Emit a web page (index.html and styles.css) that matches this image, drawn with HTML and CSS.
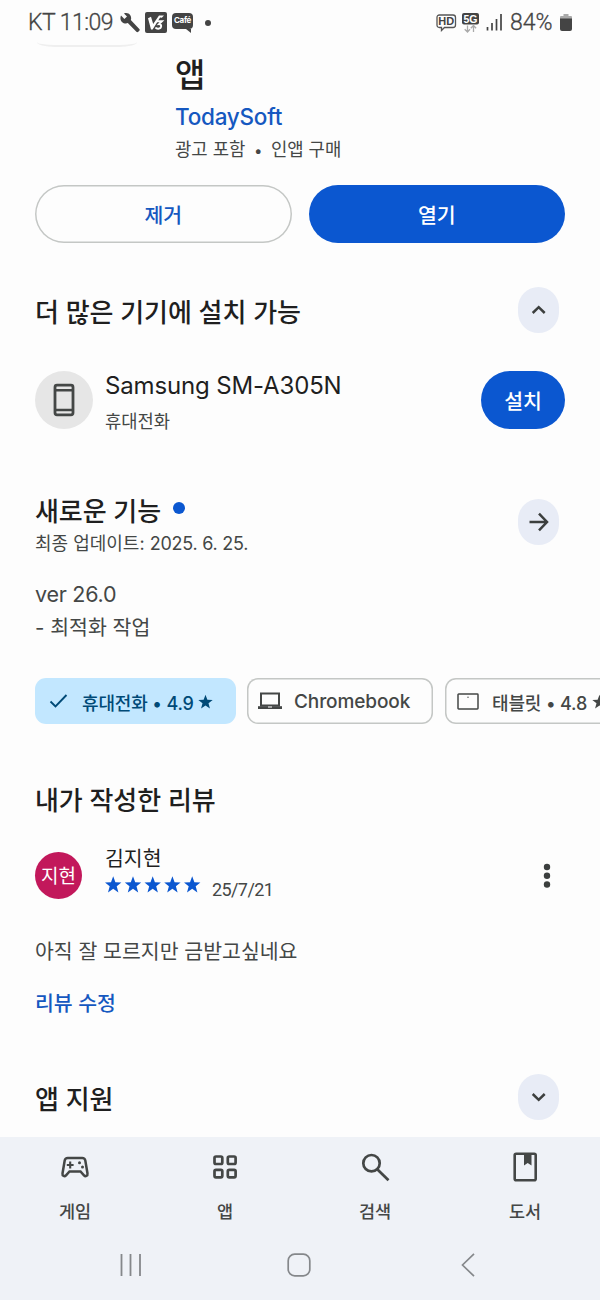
FILE: index.html
```html
<!DOCTYPE html>
<html lang="ko">
<head>
<meta charset="utf-8">
<title>TodaySoft</title>
<link rel="stylesheet" href="styles.css">
</head>
<body>
<div class="screen">
  <header class="status">
    <span class="clock">KT 11:09</span>
    <svg class="wrench" width="20" height="20" viewBox="0 0 20 20"><path d="M1 2.600 4.400 6 7 3.400 4 .5C6.400-.4 9 .3 10.300 2.200c1 1.500 1.100 3.300.5 4.900l8.500 8.800c.6.600.6 1.300 0 1.900l-1 1c-.6.600-1.300.6-1.900 0L7.800 10.100C5.800 10.900 3.600 10.400 2 8.900.3 7.200 0 4.800 1 2.600z" fill="#444"/></svg>
    <svg class="v3" width="22" height="21" viewBox="0 0 22 21"><rect width="22" height="21" rx="2" fill="#444"/><path d="M3 6.200 6 4.800l2.200 7.300L14 3.500h5l-2.200 2.300-1.700-.3L7.600 17.500H6z" fill="#fff"/><path d="M12 9.200h5l-3 2.900c3-.1 3 4.400-.6 4.600-1.400.1-2.400-.4-3-1.200" fill="none" stroke="#fff" stroke-width="1.900"/></svg>
    <span class="cafe">Café<svg width="6" height="4" viewBox="0 0 6 4"><path d="M0 0h5v4z" fill="#444"/></svg></span>
    <span class="notice-dot"></span>
    <span class="status-right">
      <svg width="21" height="18" viewBox="0 0 21 18"><path d="M3.500 1h13.500q2.500 0 2.500 2.500v7.500q0 2.500-2.500 2.500H8.500L5.500 16.500v-3H3.500Q1 13.500 1 11V3.500Q1 1 3.500 1z" fill="none" stroke="#555" stroke-width="1.300"/><text x="10.300" y="11.300" text-anchor="middle" class="hd">HD</text></svg>
      <svg class="fiveg" width="17" height="20" viewBox="0 0 17 20"><rect width="17" height="11.500" rx="2" fill="#444"/><text x="8.500" y="9.700" text-anchor="middle" class="g">5G</text><path d="M5.500 12.500V19M2.700 16.200l2.800 2.800 2.500-2.800M11.500 19v-6.500M8.800 15.300l2.700-2.800 2.600 2.800" fill="none" stroke="#aaa" stroke-width="1.300"/></svg>
      <svg class="signal" width="17" height="17" viewBox="0 0 17 17"><path d="M1.500 13v3.500M6 9v7.500M10.500 5v11.500M15 0v16.500" stroke="#444" stroke-width="1.700"/></svg>
      <span class="pct">84%</span>
      <svg class="battery" width="12" height="17" viewBox="0 0 12 17"><path d="M3.500 0h5v2H11q1 0 1 1v3H0V3q0-1 1-1h2.500z" fill="#aaa"/><path d="M0 4.500h12V15q0 2-2 2H2q-2 0-2-2z" fill="#444"/></svg>
    </span>
  </header>

  <main class="page">
    <div class="hero">
      <div class="thumb"></div>
      <div class="hero-text">
        <h1>앱</h1>
        <a class="developer">TodaySoft</a>
        <p class="notes">광고 포함<span class="sep">•</span>인앱 구매</p>
      </div>
    </div>
    <div class="actions"><button class="btn outline">제거</button><button class="btn filled">열기</button></div>

    <div class="section-head devices-head"><h2>더 많은 기기에 설치 가능</h2><span class="oval"><svg width="20" height="20" viewBox="0 0 20 20"><path d="M3.700 13 9.700 7.200l6 5.800"/></svg></span></div>
    <div class="device">
      <span class="device-icon"><svg width="22" height="34" viewBox="0 0 22 34"><rect x="2" y="2.200" width="18" height="29.600" rx="2" fill="none" stroke="#444746" stroke-width="2.800"/><path d="M2 7.200h18M2 27h18" stroke="#444746" stroke-width="2.600"/></svg></span>
      <div class="device-text"><span class="device-name">Samsung SM-A305N</span><span class="device-kind">휴대전화</span></div>
      <button class="btn filled install">설치</button>
    </div>

    <div class="news">
      <div class="news-text"><h2>새로운 기능<span class="new-dot"></span></h2><p class="updated">최종 업데이트: <span>2025. 6. 25.</span></p></div>
      <span class="oval"><svg width="22" height="22" viewBox="0 0 22 22"><path d="M1.500 11h17.500M11 2.700 19 11l-8 8.300"/></svg></span>
    </div>
    <div class="changes"><p class="ver">ver 26.0</p><p class="change">- 최적화 작업</p></div>

    <div class="chips">
      <span class="chip selected"><svg class="check" width="19" height="16" viewBox="0 0 19 16"><path d="M1.500 8.500 6.500 13.500 17.500 2" fill="none" stroke="#004a77" stroke-width="1.900"/></svg><span class="chip-label">휴대전화 • 4.9</span><svg class="star" width="15" height="15" viewBox="0 0 24 24"><path d="m12 1 3 8 8.500.4-6.700 5.300L19.100 23 12 18.300 4.900 23l2.300-8.300L.5 9.400 9 9z"/></svg></span>
      <span class="chip chrome"><svg width="24" height="18" viewBox="0 0 24 18"><path d="M3 1.500h18v12H3z" fill="none" stroke="#444746" stroke-width="2"/><path d="M0 14.200h24V17H0z" fill="#444746"/><path d="M10 15h4" stroke="#fff"/></svg><span class="chip-label">Chromebook</span></span>
      <span class="chip tablet"><svg width="22" height="17" viewBox="0 0 22 17"><rect x="1" y="1" width="20" height="15" rx=".7" fill="none" stroke="#444746" stroke-width="1.500"/><circle cx="11" cy="4.300" r=".7" fill="#444746"/></svg><span class="chip-label">태블릿 • 4.8</span><svg class="star" width="15" height="15" viewBox="0 0 24 24"><path d="m12 1 3 8 8.500.4-6.700 5.300L19.100 23 12 18.300 4.900 23l2.300-8.300L.5 9.400 9 9z"/></svg></span>
    </div>

    <h2 class="review-head">내가 작성한 리뷰</h2>
    <div class="reviewer">
      <span class="avatar">지현</span>
      <div class="reviewer-text">
        <span class="name">김지현</span>
        <div class="rating">
          <svg width="97" height="18" viewBox="0 0 97 18"><defs><path id="s" d="m8.200.3 2.200 5.900 6 .2-4.700 3.800 1.700 6.200-5.200-3.600-5.200 3.600 1.700-6.200L0 6.400l6-.2z"/></defs><g fill="#0b57d0"><use href="#s"/><use href="#s" x="19.800"/><use href="#s" x="39.500"/><use href="#s" x="59.200"/><use href="#s" x="79"/></g></svg>
          <span class="date">25/7/21</span>
        </div>
      </div>
      <svg class="more" width="8" height="26" viewBox="0 0 8 26"><g fill="#3c3f3e"><circle cx="4" cy="4" r="3.200"/><circle cx="4" cy="12.800" r="3.200"/><circle cx="4" cy="21.500" r="3.200"/></g></svg>
    </div>
    <p class="review">아직 잘 모르지만 금받고싶네요</p>
    <a class="edit">리뷰 수정</a>
    <div class="section-head support"><h2>앱 지원</h2><span class="oval"><svg width="20" height="20" viewBox="0 0 20 20"><path d="m3.700 7 6 5.800 6-5.800"/></svg></span></div>
  </main>

  <nav class="tabs">
    <div class="tab"><svg width="30" height="30" viewBox="0 0 30 30"><path d="M7.800 6h14.400q2.600 0 3.100 2.500l2.200 13c.4 2.600-2.100 3.300-3.500 1.800L20.500 19.500h-11L6 23.300c-1.400 1.500-3.900.8-3.500-1.800l2.200-13Q5.200 6 7.800 6z" fill="none" stroke="#444746" stroke-width="2.500"/><path d="M6.800 13h6.800M10.200 9.600v6.800" stroke="#444746" stroke-width="2.100"/><circle cx="19.500" cy="10.700" r="1.500" fill="#444746"/><circle cx="22.500" cy="15" r="1.500" fill="#444746"/></svg><span>게임</span></div>
    <div class="tab"><svg width="30" height="30" viewBox="0 0 30 30"><g fill="none" stroke="#444746" stroke-width="2.700"><rect x="4.500" y="4.500" width="7.800" height="7.500" rx="1.500"/><rect x="17.800" y="4.500" width="7.800" height="7.500" rx="1.500"/><rect x="4.500" y="17.800" width="7.800" height="7.500" rx="1.500"/><rect x="17.800" y="17.800" width="7.800" height="7.500" rx="1.500"/></g></svg><span>앱</span></div>
    <div class="tab"><svg width="30" height="30" viewBox="0 0 30 30"><g fill="none" stroke="#444746" stroke-width="2.700"><circle cx="11.500" cy="11.200" r="8.200"/><path d="m17.500 17.500 11 10.800"/></g></svg><span>검색</span></div>
    <div class="tab"><svg width="30" height="30" viewBox="0 0 30 30"><rect x="4.700" y="1.700" width="21" height="26.600" rx="1.500" fill="none" stroke="#444746" stroke-width="2.600"/><path d="M14 2h7.500v11.500L17.700 11 14 13.500z" fill="#444746"/></svg><span>도서</span></div>
  </nav>
  <footer class="system">
    <svg width="22" height="24" viewBox="0 0 22 24"><path d="M1.500 1v22M10.500 1v22M20 1v22" stroke="#85888b" stroke-width="1.800"/></svg>
    <svg class="home" width="24" height="24" viewBox="0 0 24 24"><rect x="1.200" y="1.200" width="21.600" height="21.600" rx="6.500" fill="none" stroke="#85888b" stroke-width="1.700"/></svg>
    <svg width="14" height="24" viewBox="0 0 14 24"><path d="M13 .8 1.500 12 13 23.200" fill="none" stroke="#85888b" stroke-width="1.700"/></svg>
  </footer>
</div>
</body>
</html>
```
FILE: styles.css
```css
* { box-sizing: border-box; margin: 0; padding: 0; }
body { background: #fdfdfd; font-family: Inter, "Noto Sans CJK KR", sans-serif; color: #1f1f1f; }
svg { display: block; flex: none; }
button { font: inherit; border: 0; }
span, p, a, h1, h2, button { white-space: nowrap; }
.screen { width: 600px; height: 1300px; overflow: hidden; display: flex; flex-direction: column; }

.status { height: 42px; padding: 3px 28px 0; display: flex; align-items: center; font-family: Roboto, sans-serif; color: #444; flex: none; }
.clock { font-size: 23px; width: 92px; font-weight: 300; -webkit-text-stroke: .3px #444; letter-spacing: -.55px; }
.v3 { margin-left: 5px; }
.cafe { width: 21px; height: 16px; margin: -4px 0 0 5px; background: #444; color: #fff; border-radius: 4px; font: bold 8px/15px Inter, sans-serif; text-align: center; position: relative; letter-spacing: -.3px; }
.cafe svg { position: absolute; right: 1px; bottom: -4px; }
.notice-dot { width: 6px; height: 6px; border-radius: 50%; background: #444; margin-left: 12px; }
.status-right { margin-left: auto; display: flex; align-items: center; }
.hd { font: bold 11px "Liberation Sans", sans-serif; fill: #444; }
.g { font: bold 10.500px "Liberation Sans", sans-serif; fill: #fff; }
.fiveg { margin-left: 5px; }
.signal { margin-left: 7px; }
.pct { font-size: 23px; font-weight: 300; -webkit-text-stroke: .3px #444; margin-left: 7px; width: 47px; letter-spacing: 0; }
.battery { margin-left: 3px; }

.page { height: 1095px; padding: 0 35px; flex: none; overflow: hidden; }
.hero { display: flex; height: 143px; }
.thumb { width: 100px; height: 5px; margin-left: 2px; border-radius: 0 0 18px 18px / 0 0 5px 5px; border-bottom: 2px solid #efefef; }
.hero-text { margin-left: 38px; display: flex; flex-direction: column; }
h1 { font-size: 33px; line-height: 40px; font-weight: 500; margin-top: 13px; }
.developer { font-size: 22.500px; line-height: 30px; font-weight: 500; color: #1558c0; margin-top: 7px; letter-spacing: -.25px; }
.notes { font-size: 17.800px; line-height: 24px; color: #444746; margin-top: 6px; }
.sep { margin: 0 8.500px; font-size: 15px; }

.actions { display: flex; gap: 17px; }
.btn { height: 58px; border-radius: 29px; font-size: 20.500px; font-weight: 500; line-height: 58px; padding-top: 3px; line-height: 55px; text-align: center; }
.actions .btn { width: 256.500px; }
.outline { background: transparent; box-shadow: inset 0 0 0 1.500px #c4c7c5; color: #1558c0; }
.filled { background: #0b57d0; color: #fff; }

h2 { font-size: 26px; line-height: 40px; font-weight: 500; letter-spacing: -.08px; }
.section-head { display: flex; justify-content: space-between; align-items: center; height: 46px; padding-right: 6px; }
.section-head h2 { padding-top: 5px; }
.devices-head { margin-top: 44px; }
.oval { width: 41px; height: 46px; border-radius: 20.500px; background: #e8ecf6; display: flex; align-items: center; justify-content: center; flex: none; }
.oval path { fill: none; stroke: #3c3f3e; stroke-width: 2.500; }

.device { display: flex; height: 58px; margin-top: 38px; }
.device-icon { width: 58px; height: 58px; border-radius: 50%; background: #e6e6e6; display: flex; align-items: center; justify-content: center; }
.device-text { display: flex; flex-direction: column; margin-left: 12px; flex: 1; }
.device-name { font-size: 24px; line-height: 30px; letter-spacing: -.15px; }
.device-kind { font-size: 17.700px; line-height: 26px; margin-top: 8px; color: #444746; }
.install { width: 84px; }

.news { display: flex; justify-content: space-between; align-items: flex-start; margin-top: 63px; padding-right: 6px; height: 64px; }
.news .oval { margin-top: 7px; }
.news h2 { display: flex; }
.new-dot { width: 12px; height: 12px; border-radius: 50%; background: #0b57d0; margin: 10px 0 0 12px; }
.updated { font-size: 18px; line-height: 26px; color: #444746; margin-top: -1px; }
.updated span { letter-spacing: -.25px; }
.changes { margin-top: 21px; color: #444746; height: 71px; }
.ver { font-size: 21.500px; line-height: 34px; letter-spacing: -.25px; }
.change { font-size: 20.500px; line-height: 34px; }

.chips { display: flex; gap: 12px; margin: 30px -35px 0 0; height: 46px; overflow: hidden; }
.chip { height: 46px; box-shadow: inset 0 0 0 1.500px #c4c7c5; border-radius: 11px; display: flex; align-items: center; font-size: 18px; font-weight: 500; color: #444746; flex: none; }
.chip svg { fill: #444746; }
.chip-label { padding-top: 2px; }
.selected { width: 200.500px; background: #c2e7ff; box-shadow: none; color: #004a77; padding-left: 14px; }
.selected .chip-label { margin-left: 14px; width: 113px; letter-spacing: -.15px; }
.chip.selected .star { fill: #004a77; margin-left: 3px; }
.chrome { width: 186px; padding-left: 11px; margin-left: -.5px; }
.chrome .chip-label { margin-left: 12px; font-size: 19px; letter-spacing: -.1px; padding-top: 0; }
.tablet { width: 200px; padding-left: 12px; }
.tablet .chip-label { margin-left: 13px; width: 96px; letter-spacing: -.15px; }
.tablet .star { margin-left: 4px; }

.review-head { margin-top: 57px; }
.reviewer { display: flex; margin-top: 24px; height: 56px; align-items: flex-start; }
.avatar { width: 47px; height: 47px; margin-top: 7px; border-radius: 50%; background: #c2185b; color: #fff; font-size: 19px; line-height: 45px; padding-top: 2px; text-align: center; }
.reviewer-text { margin-left: 23px; flex: 1; }
.name { display: block; font-size: 20.500px; line-height: 28px; }
.rating { display: flex; height: 24px; margin-top: 3px; }
.date { font-family: Roboto, sans-serif; font-size: 18px; line-height: 27px; color: #444746; margin-left: 10px; letter-spacing: -.6px; }
.more { margin: 18px 14px 0 0; }
.review { font-size: 20.500px; line-height: 30px; color: #444746; margin-top: 36px; }
.edit { display: block; font-size: 20.500px; line-height: 30px; font-weight: 500; color: #1558c0; margin-top: 22px; }
.support { margin-top: 55px; }

.tabs { height: 93px; background: #eff2f7; display: flex; flex: none; }
.tab { width: 150px; padding-top: 15px; display: flex; flex-direction: column; align-items: center; font-size: 17.500px; font-weight: 500; line-height: 26px; color: #444746; }
.tab span { margin-top: 17px; }
.system { flex: 1; background: #eff2f7; display: flex; padding: 23px 0 0 120px; }
.home { margin-left: 145px; margin-right: 150px; }
```
